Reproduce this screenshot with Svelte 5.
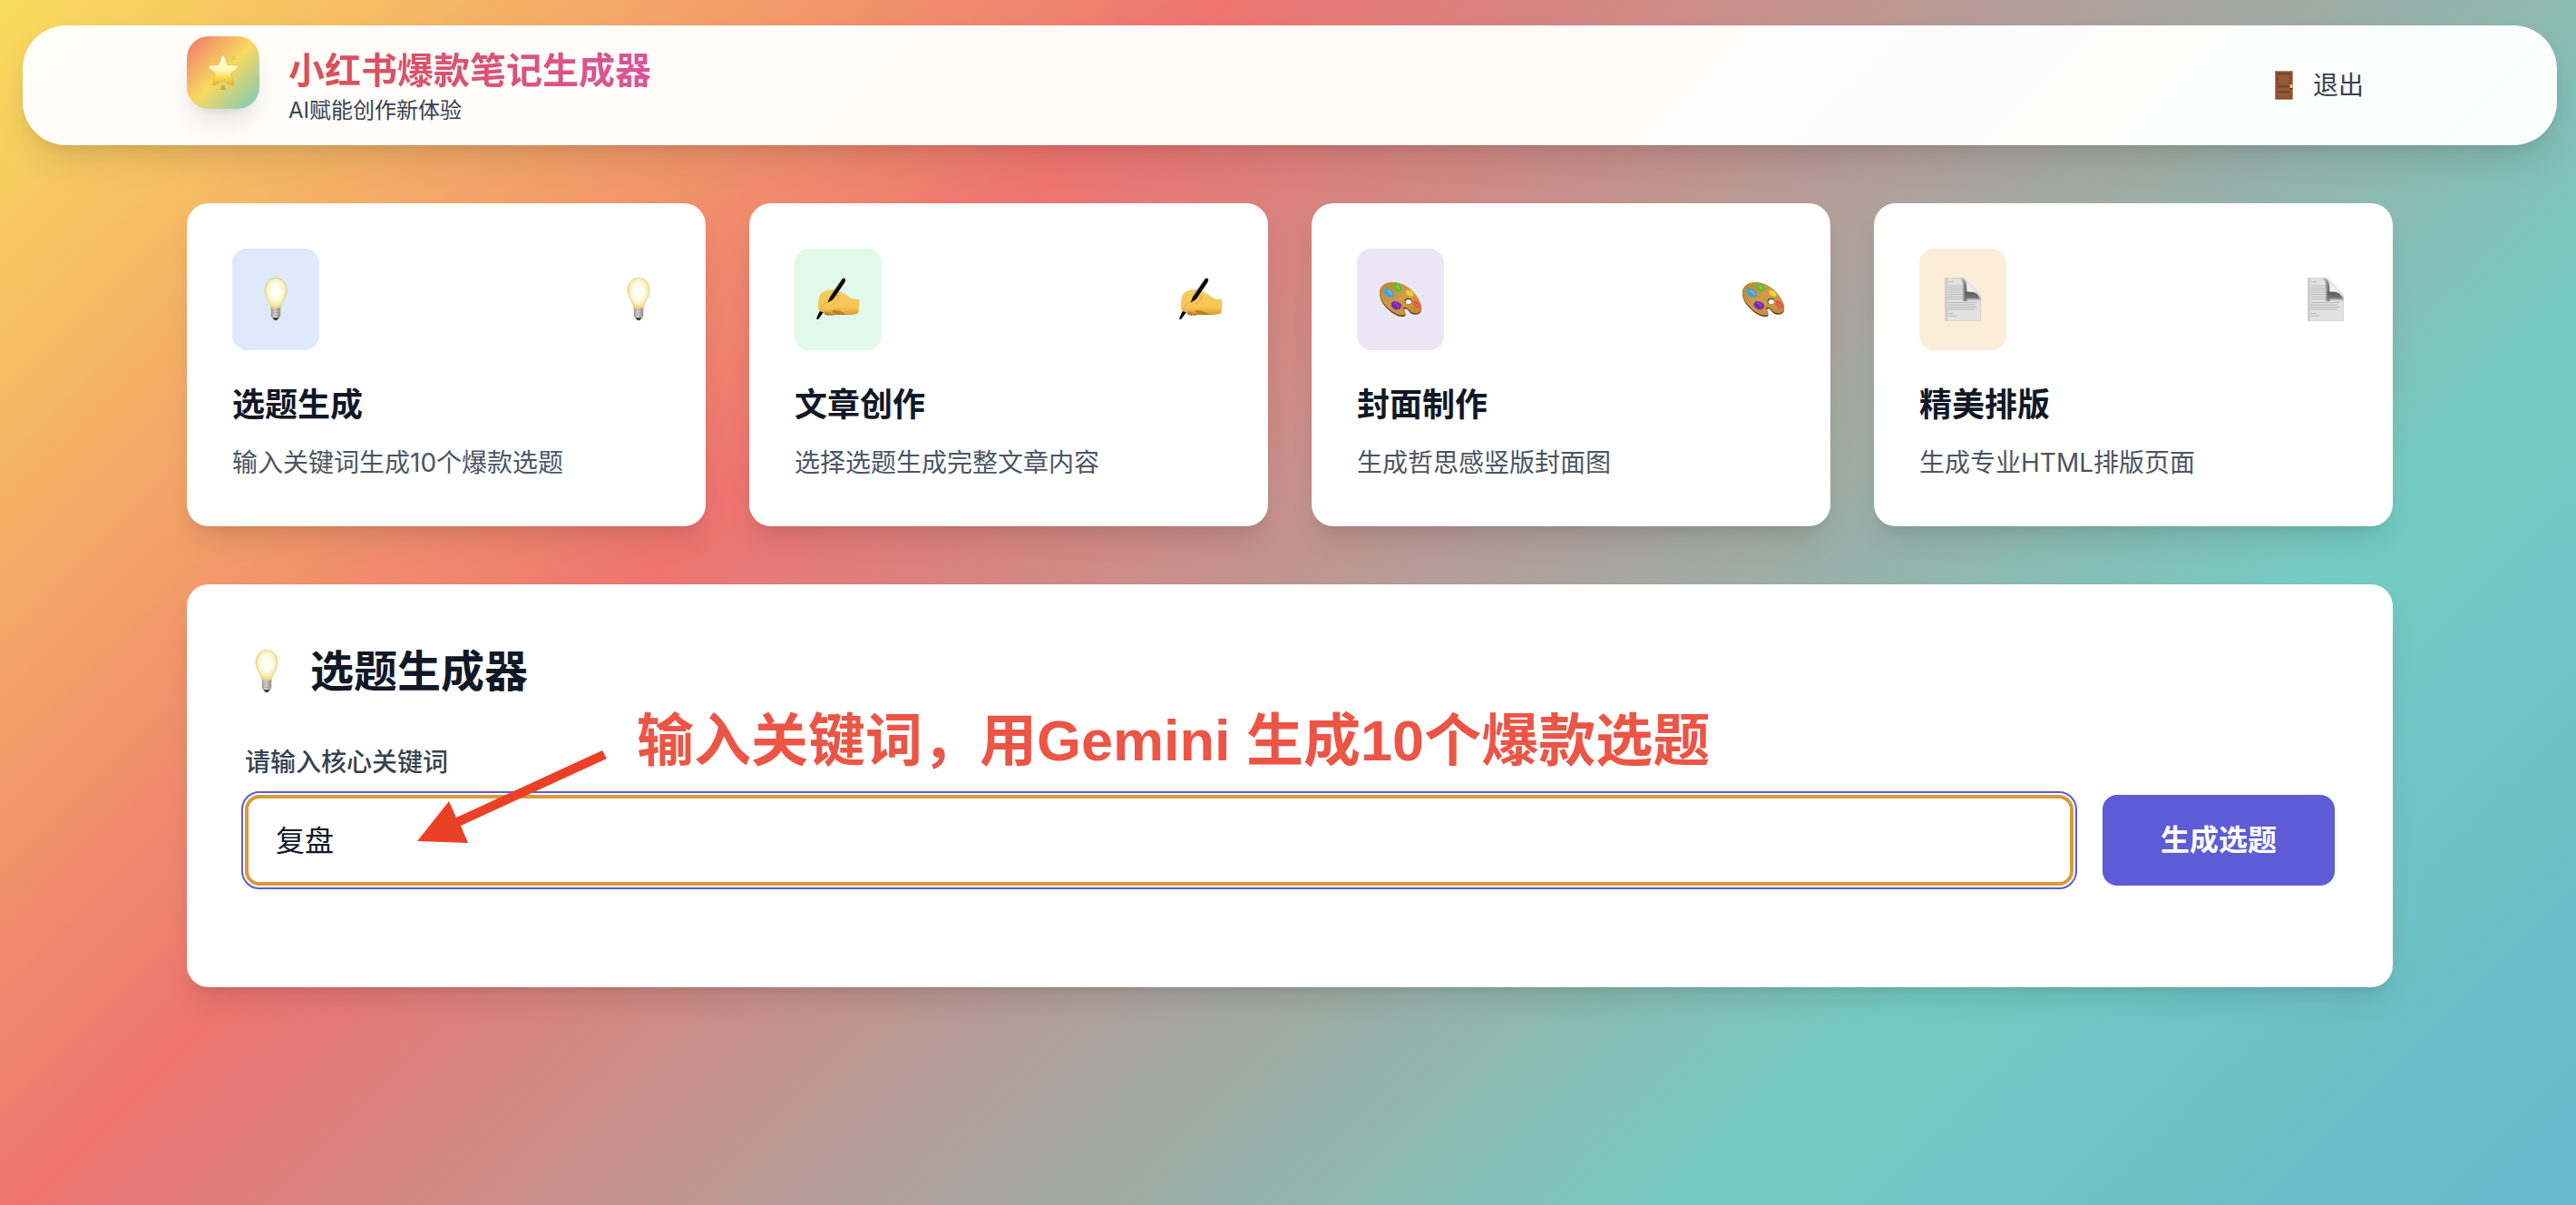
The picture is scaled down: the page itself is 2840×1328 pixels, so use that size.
<script>
	let keyword = $state('复盘');

	const features = [
		{ icon: 'bulb', tint: 'blue', title: '选题生成', desc: '输入关键词生成10个爆款选题' },
		{ icon: 'hand', tint: 'green', title: '文章创作', desc: '选择选题生成完整文章内容' },
		{ icon: 'palette', tint: 'purple', title: '封面制作', desc: '生成哲思感竖版封面图' },
		{ icon: 'page', tint: 'orange', title: '精美排版', desc: '生成专业HTML排版页面' }
	];

	function submit(e) {
		e.preventDefault();
	}
</script>

<!-- shared gradients for all the icons -->
<svg class="defs" width="0" height="0" aria-hidden="true">
	<defs>
		<radialGradient id="g-glass" cx="50%" cy="44%" r="56%">
			<stop offset="0" stop-color="#fffffb" />
			<stop offset="0.45" stop-color="#fffdf0" />
			<stop offset="0.75" stop-color="#f9edb4" />
			<stop offset="1" stop-color="#ecd072" />
		</radialGradient>
		<linearGradient id="g-cap" x1="0" x2="1" y1="0" y2="0">
			<stop offset="0" stop-color="#9c968e" />
			<stop offset="0.4" stop-color="#dedad4" />
			<stop offset="1" stop-color="#8f8a84" />
		</linearGradient>
		<linearGradient id="g-skin" x1="0" x2="0" y1="0" y2="1">
			<stop offset="0" stop-color="#f3cc62" />
			<stop offset="0.7" stop-color="#f5c753" />
			<stop offset="1" stop-color="#d89a34" />
		</linearGradient>
		<linearGradient id="g-wood" x1="0" x2="1" y1="0" y2="1">
			<stop offset="0" stop-color="#b98334" />
			<stop offset="0.5" stop-color="#d09c48" />
			<stop offset="1" stop-color="#bd8435" />
		</linearGradient>
		<linearGradient id="g-fold" x1="0" x2="1" y1="1" y2="0">
			<stop offset="0" stop-color="#d6d6d6" />
			<stop offset="0.4" stop-color="#f4f4f4" />
			<stop offset="1" stop-color="#c4c4c4" />
		</linearGradient>
		<linearGradient id="g-dark" x1="0" x2="1" y1="0" y2="0">
			<stop offset="0" stop-color="#d8d8d8" stop-opacity="0" />
			<stop offset="1" stop-color="#4c4c4c" />
		</linearGradient>
		<linearGradient id="g-under" x1="0" x2="0" y1="0" y2="1">
			<stop offset="0" stop-color="#585858" />
			<stop offset="0.6" stop-color="#737373" />
			<stop offset="1" stop-color="#d8d8d8" stop-opacity="0" />
		</linearGradient>
		<linearGradient id="g-star" x1="0" x2="0" y1="0" y2="1">
			<stop offset="0" stop-color="#fffef0" />
			<stop offset="0.5" stop-color="#fffbb8" />
			<stop offset="0.75" stop-color="#f8da48" />
			<stop offset="1" stop-color="#eda93a" />
		</linearGradient>
	</defs>
</svg>

{#snippet bulb()}
	<path d="M24 0.5C16.500 0.500 12 6.500 12 14C12 20.500 15.500 24 17.500 28.500C18.400 30.800 18.600 32.500 18.800 34H29.200C29.400 32.500 29.600 30.800 30.500 28.500C32.500 24 36 20.500 36 14C36 6.500 31.500 0.500 24 0.500Z" fill="url(#g-glass)" stroke="#e6cb78" stroke-width="0.9" />
	<path d="M18.800 33.500H29.200V42.500L27.500 44.500H20.500L18.800 42.500Z" fill="url(#g-cap)" />
	<path d="M19 36.200L29 35.600M19 39L29 38.400M19 41.800L29 41.200" stroke="#8d8780" stroke-width="0.5" />
	<path d="M20.300 44H27.700L25.500 47H22.500Z" fill="#46423f" />
{/snippet}

{#snippet hand()}
	<path d="M8 36Q9 42.500 11.500 41Q13 42.800 15 41Q17 42.800 19 41Q22 42 24 39.500L24 34L12 31Z" fill="#c27e28" />
	<path d="M3 21C4.500 15.500 12 12.500 19 13C24 13.500 31 17 36 21.500C39 24 43 24 47 23.500C47.800 28 47.500 35 46 39.500C42 40.500 38 41 33 41H23C16 38.500 10 37.500 5 37C1.500 36 1.500 31 2 27Z" fill="url(#g-skin)" />
	<path d="M5 36C5 31 10 27.500 15 25C19 23 22 19 24.500 19.500C26 22 23 26.500 18 29.500" fill="none" stroke="#dda741" stroke-width="1" />
	<path d="M17 37C22 34 27 37.500 33 40.500C27 41.500 21 41.500 17 37Z" fill="#a8661d" opacity="0.650" />
	<path d="M28.600 1.200Q30.500 -0.500 32.200 2L31.500 5L18.500 24L12.500 27.500L15 21.500Z" fill="#050505" />
	<path d="M28.200 2L15 21" stroke="#8a7a5c" stroke-width="0.800" />
	<path d="M3.500 37L0 45.500L2 46L8 38Z" fill="#050505" />
{/snippet}

{#snippet palette()}
	<path d="M1.500 21C-1 11 7 4.500 17 5.500C27 6.500 35 12 41 20C46 27 49 34 46 38.500C42 42 37 41 34 38C32 35.500 30.500 33.500 28.500 34.500C27 36 31 39.500 29 42.500C23 45 14 39 9.500 34C5 29.500 2.500 26 1.500 21Z" fill="#5f3b12" />
	<path d="M1.500 19.500C-1 10 7 4 17 5C27 6 35 11 41 19C46 26 49 33 46 37.500C42 40.500 37 39.500 34 36.500C32 34 30 32 27.500 33C26 35 31 38.500 29 41C23 43.500 14 37.500 9.500 32.500C5 28 2.500 24.500 1.500 19.500Z" fill="url(#g-wood)" />
	<ellipse cx="32.500" cy="26" rx="3.900" ry="3.200" fill="#5f3b12" />
	<ellipse cx="32.800" cy="26.500" rx="3.200" ry="2.600" fill="#fdfbff" />
	<path d="M6 12.500C9 10 16 14 17 19.500C17 22.500 10.500 22.500 8.500 20C6 18 4.500 15 6 12.500Z" fill="#43a0d8" />
	<path d="M9 14.500Q14 15 14 19" fill="none" stroke="#7fd0f0" stroke-width="1.200" />
	<path d="M17 8C20 5.500 25 8.500 25.500 12C25.500 15.500 19.500 16.500 17.500 13C16 11 15.500 9.500 17 8Z" fill="#58c22f" />
	<path d="M19.500 10Q22 9.500 22.500 12.500" fill="none" stroke="#94e768" stroke-width="1.200" />
	<path d="M31 14C34 12.500 39 17 38.500 19.500C37 22 32 20.500 31 18Q29.500 15 31 14Z" fill="#f0cf3a" />
	<path d="M38 25.500C41 24 45.500 28 46 33C43 35 40 32 38.500 30Z" fill="#e8513f" />
	<path d="M40 28L44 32" stroke="#f98a7b" stroke-width="1" />
	<path d="M14 28C16 24.500 21 26 24.500 29C26 32 24 35 20 35.500C16 35 12 31 14 28Z" fill="#7b2aaf" />
	<path d="M17 28.500Q21 28 21.500 32" fill="none" stroke="#a25dd0" stroke-width="1" />
{/snippet}

{#snippet page()}
	<path d="M4.500 0.500H24L43.500 20V47.500H4.500Z" fill="#e2e2e2" stroke="#cccccc" stroke-width="0.700" />
	<path d="M4.500 0.500H7.300V47.500H4.500Z" fill="#cdcdcd" />
	<path d="M8 4.500H14M8 9H26M8 11.400H26M8 13.800H26M8 16.200H26M8 18.600H26M8 21H26M8 23.400H26M8 27.500H39M8 30H38M8 32.400H39M8 34.800H37M8 39.500H13.500M8 42H17.500" stroke="#b8b8b8" stroke-width="1" />
	<path d="M18 0.500H23Q28.500 1.500 28.500 9V26H24V9Q24 2 18 0.500Z" fill="url(#g-dark)" />
	<path d="M26 15H38L43.800 24V27H26Z" fill="url(#g-under)" />
	<path d="M23 0.300Q28.800 2 28.500 15.500Q41 14.500 43.800 23Q43.500 18.500 39.500 14.500L29 4Q26 0.300 23 0.300Z" fill="url(#g-fold)" stroke="#b5b5b5" stroke-width="0.400" />
{/snippet}

{#snippet icon(name)}
	<svg class="icon" viewBox="0 0 48 48" aria-hidden="true">
		{#if name === 'bulb'}
			{@render bulb()}
		{:else if name === 'hand'}
			{@render hand()}
		{:else if name === 'palette'}
			{@render palette()}
		{:else}
			{@render page()}
		{/if}
	</svg>
{/snippet}

<div class="app">
	<header class="topbar">
		<div class="container topbar-inner">
			<div class="brand">
				<div class="logo">
					<svg viewBox="0 0 40 40" aria-hidden="true">
						<path d="M9 1L11.500 7L5 5.500Q6 2.500 9 1ZM31 1L28.500 7L35 5.500Q34 2.500 31 1Z" fill="#e0cf48" />
						<path d="M17 39Q17.500 34.500 20 33.500Q22.500 34.500 23 39Z" fill="#e5a03a" />
						<path d="M20 0.500Q21.300 1 21.800 3L25 11.500L35 12Q37.500 13 35.500 15L28.500 21.500L32 33Q31.500 35 29.500 34L20 29L10.500 34Q8.500 35 8 33L11.500 21.500L4.500 15Q2.500 13 5 12L15 11.500L18.200 3Q18.700 1 20 0.500Z" fill="url(#g-star)" stroke="#e9ae3a" stroke-width="0.600" />
					</svg>
				</div>
				<div>
					<h1>小红书爆款笔记生成器</h1>
					<p>AI赋能创作新体验</p>
				</div>
			</div>
			<button class="logout" type="button">
				<svg viewBox="0 0 32 32" aria-hidden="true">
					<rect x="6.500" y="0.500" width="19" height="31" fill="#8c5230" stroke="#a98467" stroke-width="0.800" />
					<path d="M9.500 3.500H22.500V14H9.500ZM9.500 17H22.500V21.500H9.500ZM9.500 24.500H22.500V28.500H9.500Z" fill="#965a36" />
					<path d="M9.500 3.500H22.500M9.500 17.500H22.500M9.500 23.500H22.500" stroke="#6a3c20" stroke-width="1.500" />
					<path d="M9.500 3V14.500M22.500 3V14.500" stroke="#7a4526" />
					<rect x="22.500" y="15" width="3" height="4" fill="#e9c53c" />
					<path d="M23 19.500H25.500" stroke="#4a2811" />
				</svg>
				<span>退出</span>
			</button>
		</div>
	</header>

	<main class="container">
		<section class="features">
			{#each features as f}
				<article class="card">
					<div class="card-top">
						<div class="tile {f.tint}">{@render icon(f.icon)}</div>
						{@render icon(f.icon)}
					</div>
					<h3>{f.title}</h3>
					<p>{f.desc}</p>
				</article>
			{/each}
		</section>

		<section class="panel">
			<h2>{@render icon('bulb')}<span>选题生成器</span></h2>
			<form onsubmit={submit}>
				<label for="keyword">请输入核心关键词</label>
				<div class="row">
					<input id="keyword" type="text" bind:value={keyword} />
					<button class="generate" type="submit">生成选题</button>
				</div>
			</form>

			<!-- hint drawn over the form -->
			<div class="hint">
				<svg viewBox="0 0 210 104" aria-hidden="true">
					<polygon points="0,101 35,57 43,75 204,1 209,10 48,84 56,103" fill="#ea4025" />
				</svg>
				<span>输入关键词，用Gemini 生成10个爆款选题</span>
			</div>
		</section>
	</main>
</div>

<style>
	:global(body) {
		margin: 0;
	}

	.defs {
		position: absolute;
	}

	.app {
		box-sizing: border-box;
		min-height: 100vh;
		padding: 28px 0 64px 4px;
		font-family: Inter, 'Noto Sans CJK SC', sans-serif;
		color: #111827;
		background: linear-gradient(135deg, #f8dc5e 0%, #ee7471 32.5%, #73cbc2 77%, #69b7cb 100%);
	}

	h1, h2, h3, p {
		margin: 0;
	}

	button, input {
		font-family: inherit;
	}

	.container {
		box-sizing: border-box;
		max-width: 2432px;
		margin: 0 auto;
	}

	.icon {
		display: block;
		flex: none;
		width: 48px;
		height: 48px;
	}

	.topbar {
		margin: 0 21px;
		border-radius: 48px;
		background: rgba(255, 255, 255, 0.96);
		box-shadow: 0 20px 40px -8px rgba(0, 0, 0, 0.12), 0 8px 16px -8px rgba(0, 0, 0, 0.1);
	}

	.topbar-inner {
		display: flex;
		justify-content: space-between;
		align-items: center;
		height: 132px;
	}

	.brand {
		display: flex;
		align-items: flex-start;
		gap: 32px;
		height: 108px;
	}

	.logo {
		display: flex;
		align-items: center;
		justify-content: center;
		width: 80px;
		height: 80px;
		border-radius: 24px;
		background: linear-gradient(135deg, #f0736d 0%, #f8da5e 50%, #77c9c0 100%);
		box-shadow: 0 20px 30px -6px rgba(0, 0, 0, 0.1), 0 8px 12px -8px rgba(0, 0, 0, 0.1);
	}

	.logo svg {
		width: 40px;
		height: 40px;
	}

	.brand h1 {
		margin-top: 10px;
		font-size: 40px;
		line-height: 56px;
		font-weight: 700;
		color: transparent;
		background: linear-gradient(90deg, #dc5050, #da5598);
		-webkit-background-clip: text;
		background-clip: text;
	}

	.brand p {
		font-size: 24px;
		line-height: 32px;
		color: #374151;
	}

	.logout {
		display: flex;
		align-items: center;
		gap: 16px;
		padding: 16px 32px;
		border: 0;
		background: none;
		font-size: 28px;
		line-height: 40px;
		color: #374151;
		cursor: pointer;
	}

	.logout svg {
		width: 32px;
		height: 32px;
	}

	.features {
		display: grid;
		grid-template-columns: repeat(4, 1fr);
		gap: 48px;
		padding: 64px 0;
	}

	.card, .panel {
		border-radius: 24px;
		background: #fff;
		box-shadow: 0 20px 30px -6px rgba(0, 0, 0, 0.1), 0 8px 12px -8px rgba(0, 0, 0, 0.1);
	}

	.card {
		padding: 50px;
	}

	.card-top {
		display: flex;
		justify-content: space-between;
		align-items: center;
		margin-bottom: 32px;
	}

	.tile {
		padding: 32px 24px;
		border-radius: 16px;
	}

	.blue { background: #dee9fb; }
	.green { background: #e1f9e8; }
	.purple { background: #ece6f4; }
	.orange { background: #fcedd9; }

	.card h3 {
		margin-bottom: 16px;
		font-size: 36px;
		line-height: 56px;
		font-weight: 600;
	}

	.card p {
		font-size: 28px;
		line-height: 40px;
		color: #4b5563;
	}

	.panel {
		position: relative;
		padding: 64px 64px 112px;
	}

	.panel h2 {
		display: flex;
		align-items: center;
		gap: 24px;
		margin-bottom: 48px;
		font-size: 48px;
		line-height: 64px;
		font-weight: 700;
	}

	label {
		display: block;
		margin-bottom: 16px;
		font-size: 28px;
		line-height: 40px;
		font-weight: 500;
		color: #374151;
	}

	.row {
		display: flex;
		gap: 32px;
	}

	input {
		flex: 1;
		box-sizing: border-box;
		min-width: 0;
		height: 100px;
		padding: 24px 30px 28px;
		border: 4px solid #d99b36;
		border-radius: 16px;
		outline: 2px solid #5e5bd6;
		outline-offset: 2px;
		background: #fff;
		font-size: 32px;
		line-height: 40px;
		color: #111827;
	}

	.generate {
		padding: 30px 64px;
		border: 0;
		border-radius: 16px;
		background: #5d5bd5;
		font-size: 32px;
		line-height: 40px;
		font-weight: 600;
		color: #fff;
		cursor: pointer;
	}

	.hint {
		position: absolute;
		top: 126px;
		left: 254px;
		display: flex;
		align-items: flex-start;
		gap: 32px;
		pointer-events: none;
	}

	.hint svg {
		width: 210px;
		height: 104px;
		margin-top: 56px;
	}

	.hint span {
		font-family: 'Liberation Sans', 'Noto Sans CJK SC', sans-serif;
		font-size: 63px;
		line-height: 92px;
		font-weight: 600;
		color: #ec5545;
		white-space: nowrap;
	}
</style>
